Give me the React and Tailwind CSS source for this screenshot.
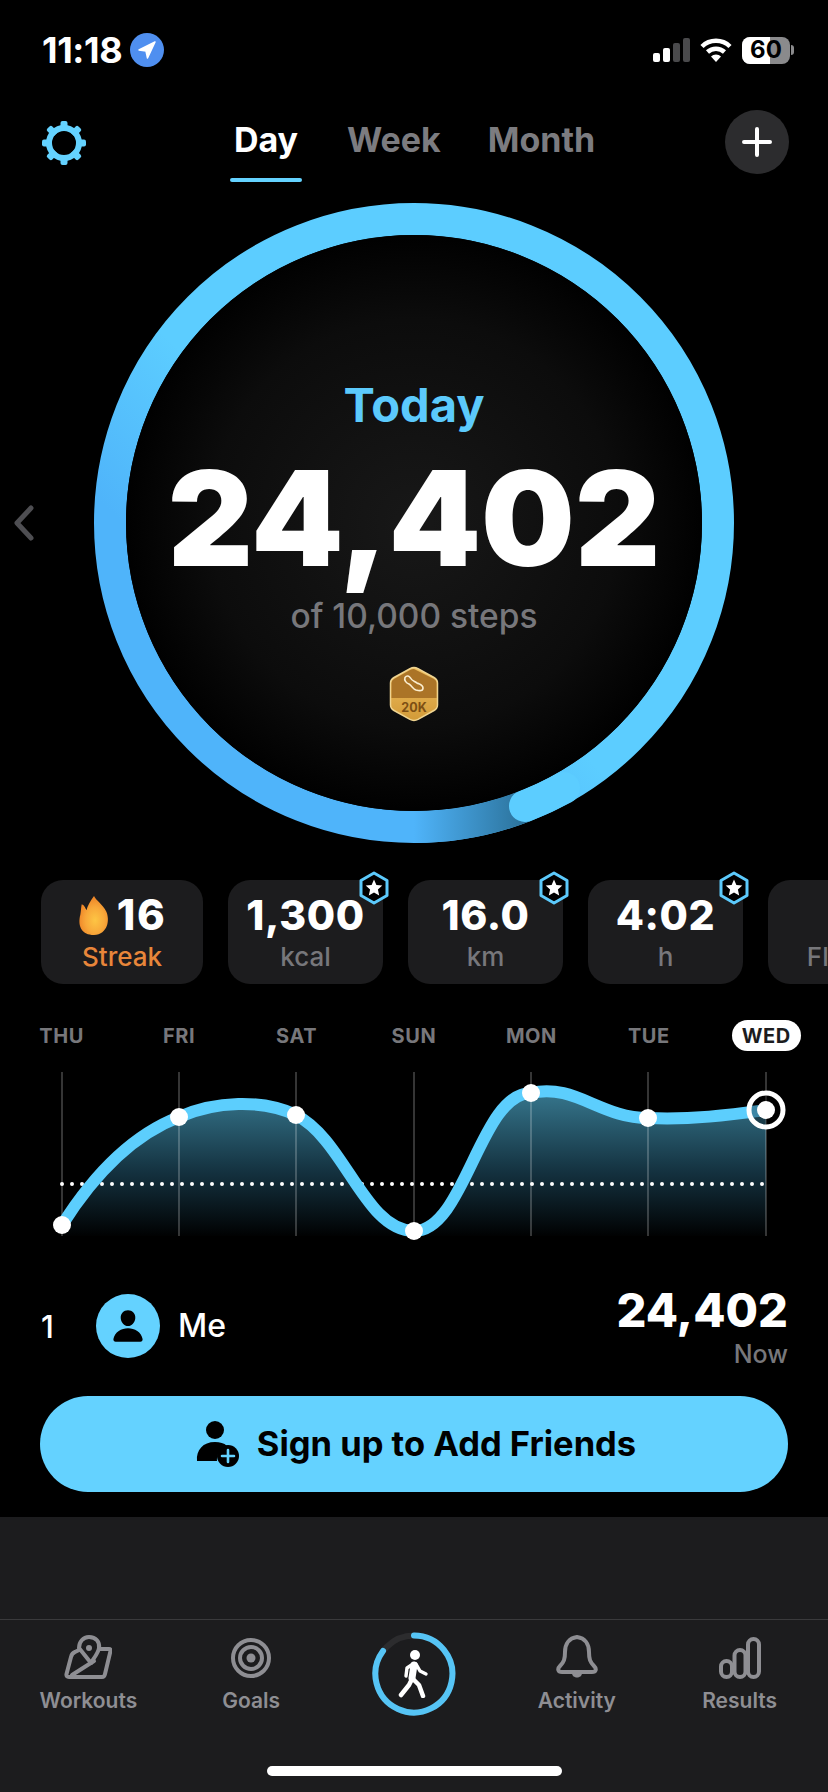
import { IoPerson } from 'react-icons/io5'

const FONT = "font-['Inter','Liberation_Sans',sans-serif]"

const STATS = [
  { value: '1,300', label: 'kcal' },
  { value: '16.0', label: 'km' },
  { value: '4:02', label: 'h' },
]

const DAYS = [
  { name: 'THU', x: 62, y: 1225 },
  { name: 'FRI', x: 179, y: 1117 },
  { name: 'SAT', x: 296, y: 1115 },
  { name: 'SUN', x: 414, y: 1231 },
  { name: 'MON', x: 531, y: 1093 },
  { name: 'TUE', x: 648, y: 1118 },
  { name: 'WED', x: 766, y: 1110 },
]

const CURVE =
  'M62 1225 C100 1165 140 1132 179 1117 C215 1101 262 1099 296 1115 C345 1140 365 1231 414 1231 C465 1231 480 1093 531 1093 C575 1083 600 1118 648 1118 C690 1120 730 1115 766 1110'

function StatusBar() {
  return (
    <div className="h-[100px] shrink-0 flex items-center justify-between pl-[42px] pr-[34px]">
      <div className="flex items-center gap-[8px]">
        <span className="text-[36px] font-bold text-white leading-none tracking-[-0.01em]">11:18</span>
        <svg width="34" height="34" viewBox="0 0 34 34">
          <circle cx="17" cy="17" r="17" fill="#4f8ff0" />
          <path d="M25 9 L9 17 L16 18 L17.5 25 Z" fill="white" stroke="white" strokeWidth="1.5" strokeLinejoin="round" />
        </svg>
      </div>
      <div className="flex items-center">
        <svg width="38" height="24" viewBox="0 0 38 24">
          <rect x="0" y="15" width="7" height="9" rx="2" fill="white" />
          <rect x="10" y="10" width="7" height="14" rx="2" fill="white" />
          <rect x="20" y="5" width="7" height="19" rx="2" fill="#4a4a4c" />
          <rect x="30" y="0" width="7" height="24" rx="2" fill="#4a4a4c" />
        </svg>
        <svg width="32" height="26" viewBox="0 0 32 26" className="ml-[9px]" fill="none" stroke="white" strokeLinecap="butt">
          <path d="M2 9.5 A20 20 0 0 1 30 9.5" strokeWidth="4.5" />
          <path d="M7.5 15 A12.5 12.5 0 0 1 24.5 15" strokeWidth="4.5" />
          <path d="M16 25 L11 19.5 A7 7 0 0 1 21 19.5 Z" fill="white" stroke="none" />
        </svg>
        <div className="relative w-[48px] h-[27px] ml-[10px] rounded-[8px] overflow-hidden bg-[#8a8a8c] flex items-center justify-center">
          <div className="absolute left-0 top-0 bottom-0 w-[28px] bg-white" />
          <span className="relative text-[24px] font-bold text-black leading-none">60</span>
        </div>
        <div className="w-[3px] h-[10px] ml-[1px] rounded-r-full bg-[#8a8a8c]" />
      </div>
    </div>
  )
}

function Gear() {
  const teeth = [0, 45, 90, 135, 180, 225, 270, 315]
  return (
    <svg width="44" height="44" viewBox="0 0 44 44">
      {teeth.map(a => (
        <rect key={a} x="18.5" y="0" width="7" height="10" rx="2" fill="#64d2ff" transform={`rotate(${a} 22 22)`} />
      ))}
      <circle cx="22" cy="22" r="15" fill="none" stroke="#64d2ff" strokeWidth="6" />
    </svg>
  )
}

function TopNav() {
  return (
    <div className="relative h-[84px] shrink-0 flex items-start pl-[42px] pr-[39px] pt-[20px] justify-between">
      <div className="mt-[1px]"><Gear /></div>
      <div className="absolute left-[230px] top-0 flex gap-[47px] text-[34px] font-bold leading-none text-[#7c7c80]">
        <div className="relative pt-[23px] h-[82px] w-[72px] flex justify-center text-white">
          Day
          <div className="absolute bottom-0 left-0 right-0 h-[4px] rounded-full bg-[#64d2ff]" />
        </div>
        <div className="pt-[23px] -ml-[2px]">Week</div>
        <div className="pt-[23px]">Month</div>
      </div>
      <div className="w-[64px] h-[64px] -mt-[10px] rounded-full bg-[#2c2c2e] flex items-center justify-center">
        <svg width="30" height="30" viewBox="0 0 30 30" stroke="white" strokeWidth="4" strokeLinecap="round">
          <path d="M15 2 V28 M2 15 H28" />
        </svg>
      </div>
    </div>
  )
}

function Ring() {
  // end of the ring sits at about 68deg clockwise from +x, the tail fades under it
  return (
    <svg width="640" height="640" viewBox="0 0 640 640" className="absolute inset-0" fill="none">
      <defs>
        <linearGradient id="ringBase" x1="1" y1="0" x2="0" y2="1">
          <stop offset="0" stopColor="#5ccdff" />
          <stop offset="0.55" stopColor="#5ccdff" />
          <stop offset="0.74" stopColor="#4fb4fa" />
        </linearGradient>
        <linearGradient id="ringTail" gradientUnits="userSpaceOnUse" x1="320" y1="0" x2="432" y2="0">
          <stop offset="0" stopColor="#4fb4fa" />
          <stop offset="1" stopColor="#2b7199" />
        </linearGradient>
      </defs>
      <circle cx="320" cy="320" r="304" stroke="url(#ringBase)" strokeWidth="32" />
      <path d="M320 624 A304 304 0 0 0 431 603" stroke="url(#ringTail)" strokeWidth="32" />
      <path d="M431 603 A304 304 0 0 0 470 585" stroke="#5ccdff" strokeWidth="32" strokeLinecap="round" />
    </svg>
  )
}

function Medal() {
  return (
    <svg width="50" height="56" viewBox="0 0 50 56">
      <defs>
        <linearGradient id="medalLow" x1="0" y1="0" x2="0" y2="1">
          <stop offset="0" stopColor="#f0c060" />
          <stop offset="1" stopColor="#d29a38" />
        </linearGradient>
      </defs>
      <path d="M25 1.5 Q27 1.5 29 2.6 L45 11.5 Q48.5 13.5 48.5 17 V39 Q48.5 42.5 45 44.5 L29 53.4 Q25 55.5 21 53.4 L5 44.5 Q1.5 42.5 1.5 39 V17 Q1.5 13.5 5 11.5 L21 2.6 Q23 1.5 25 1.5 Z" fill="url(#medalLow)" stroke="#efd491" strokeWidth="1.5" />
      <path d="M25 3 L45 13 Q47.5 14.5 47.5 17 V32 H2.5 V17 Q2.5 14.5 5 13 L21 4 Q23 3 25 3 Z" fill="#ab7427" />
      <path d="M16 11.5 C18 9 20 10 21.5 12 C23 15 25 15 28 17 C31 18.5 34 19 34 22 C34 25 31 25 27 24 C24 23 23 20 20 18 C17 17 15 14 16 11.5 Z" fill="none" stroke="#fbeed0" strokeWidth="1.6" strokeLinejoin="round" />
      <text x="25" y="46" textAnchor="middle" fontSize="12.5" fontWeight="700" fill="#7d4f14" fontFamily="Inter">20K</text>
    </svg>
  )
}

function Hero() {
  return (
    <div className="relative mt-[19px] h-[640px] w-[640px] shrink-0 self-center">
      <svg width="20" height="36" viewBox="0 0 20 36" className="absolute left-[-80px] top-[302px]" fill="none" stroke="#4e4e52" strokeWidth="5" strokeLinecap="round" strokeLinejoin="round">
        <path d="M17 3 L3 18 L17 33" />
      </svg>
      <Ring />
      <div className="absolute inset-[32px] rounded-full bg-[radial-gradient(circle,#181818_0%,#0c0c0c_50%,#000_72%)] flex flex-col items-center">
        <div className="mt-[146px] text-[47px] leading-none font-bold text-[#5ccafc]">Today</div>
        <div className="mt-[35px] text-[132px] leading-[110px] font-black text-white">24,402</div>
        <div className="mt-[27px] text-[33.5px] leading-none font-medium text-[#77777b]">of 10,000 steps</div>
        <div className="mt-[32px]"><Medal /></div>
      </div>
    </div>
  )
}

function StarBadge() {
  return (
    <svg width="32" height="34" viewBox="0 0 32 34" className="absolute -top-[9px] -right-[7px]">
      <path d="M16 2 L29 9.5 V24.5 L16 32 L3 24.5 V9.5 Z" fill="#000" stroke="#5ccafc" strokeWidth="3" strokeLinejoin="round" />
      <path d="M16 8.5 L18.4 14 L24.3 14.6 L19.9 18.6 L21.2 24.4 L16 21.4 L10.8 24.4 L12.1 18.6 L7.7 14.6 L13.6 14 Z" fill="white" />
    </svg>
  )
}

function Flame() {
  return (
    <svg width="32" height="39" viewBox="0 0 34 38" preserveAspectRatio="none">
      <defs>
        <radialGradient id="flameFill" cx="0.55" cy="0.62" r="0.6">
          <stop offset="0" stopColor="#fdc544" />
          <stop offset="0.55" stopColor="#f8a83a" />
          <stop offset="1" stopColor="#ee8427" />
        </radialGradient>
      </defs>
      <path d="M17 0 C19 4 26 8 30 15 C34 23 32 37 17 38 C4 38 0 30 2 20 C3 18 3 12 4 8 C7 9 8 12 9 14 C10 10 13 5 17 0 Z" fill="url(#flameFill)" />
    </svg>
  )
}

function StatsRow() {
  return (
    <div className="mt-[27px] h-[114px] shrink-0 flex gap-[25px] pl-[41px] pt-[10px] overflow-hidden">
      <div className="w-[162px] shrink-0 rounded-[22px] bg-[#1c1c1e] flex flex-col items-center">
        <div className="flex items-center gap-[7px] mt-[16px] h-[38px]">
          <Flame />
          <span className="text-[42px] leading-none font-extrabold text-white tracking-[0.04em]">16</span>
        </div>
        <div className="mt-[8px] text-[26px] leading-[30px] font-medium text-[#e8863a]">Streak</div>
      </div>
      {STATS.map(stat => (
        <div key={stat.label} className="relative w-[155px] shrink-0 rounded-[22px] bg-[#1c1c1e] flex flex-col items-center">
          <StarBadge />
          <div className="mt-[16px] h-[38px] text-[41px] leading-[38px] font-extrabold text-white tracking-[0.015em]">{stat.value}</div>
          <div className="mt-[8px] text-[26px] leading-[30px] font-medium text-[#77777b]">{stat.label}</div>
        </div>
      ))}
      <div className="w-[155px] shrink-0 rounded-[22px] bg-[#1c1c1e] flex flex-col items-center">
        <div className="mt-[16px] h-[38px]" />
        <div className="mt-[8px] text-[26px] leading-[30px] font-medium text-[#77777b]">Floors</div>
      </div>
    </div>
  )
}

function Chart() {
  return (
    <div className="shrink-0">
      <div className="mt-[36px] h-[31px]">
        <div className="grid grid-cols-7 w-[825px] pl-[3px] text-[20px] font-bold text-[#77777b] tracking-[0.03em]">
          {DAYS.map(day => (
            <div key={day.name} className="flex justify-center items-center h-[31px]">
              <span className={day.name === 'WED' ? 'px-[10px] h-[31px] rounded-full bg-white text-[#1c1c1e] flex items-center' : ''}>
                {day.name}
              </span>
            </div>
          ))}
        </div>
      </div>
      <svg width="828" height="199" viewBox="0 1051 828 199" className="block">
        <defs>
          <linearGradient id="areaFill" gradientUnits="userSpaceOnUse" x1="0" y1="1090" x2="0" y2="1238">
            <stop offset="0" stopColor="#37788f" />
            <stop offset="0.55" stopColor="#143240" />
            <stop offset="1" stopColor="#000" />
          </linearGradient>
        </defs>
        <path d={`${CURVE} V1236 H62 Z`} fill="url(#areaFill)" />
        {DAYS.map(day => (
          <line key={day.name} x1={day.x} x2={day.x} y1="1072" y2="1236" stroke="white" strokeOpacity="0.42" strokeWidth="1" />
        ))}
        <line x1="62" x2="766" y1="1184" y2="1184" stroke="white" strokeWidth="4" strokeLinecap="round" strokeDasharray="0 10" />
        <path d={CURVE} fill="none" stroke="#5ccefd" strokeWidth="12" strokeLinecap="round" />
        {DAYS.slice(0, 6).map(day => (
          <circle key={day.name} cx={day.x} cy={day.y} r="9" fill="white" />
        ))}
        <circle cx="766" cy="1110" r="17" fill="#000" fillOpacity="0.35" stroke="white" strokeWidth="5" />
        <circle cx="766" cy="1110" r="9" fill="white" />
      </svg>
    </div>
  )
}

function Leader() {
  return (
    <div className="mt-[37px] h-[81px] shrink-0 flex items-center pl-[41px] pr-[40px] text-white">
      <span className="w-[55px] text-[31px] leading-none font-medium -mt-[3px]">1</span>
      <div className="w-[64px] h-[64px] rounded-full bg-[#64d2ff] flex items-center justify-center -mt-[3px]">
        <IoPerson size={36} color="#000" />
      </div>
      <span className="ml-[18px] text-[32px] leading-none font-medium -mt-[3px]">Me</span>
      <div className="ml-auto flex flex-col items-end">
        <span className="text-[47px] leading-[46px] font-extrabold">24,402</span>
        <span className="mt-[7px] text-[25px] leading-[28px] font-medium text-[#77777b]">Now</span>
      </div>
    </div>
  )
}

function AddFriendIcon() {
  return (
    <svg width="44" height="46" viewBox="0 0 44 46">
      <circle cx="20" cy="9" r="9" fill="#000" />
      <path d="M2 40 C1 29 8 21 20 21 C25 21 29 22 32 25 A14 14 0 0 0 22 40 Z" fill="#000" />
      <circle cx="33" cy="35" r="11" fill="#000" />
      <path d="M33 29 V41 M27 35 H39" stroke="#64d2ff" strokeWidth="2.6" strokeLinecap="round" />
    </svg>
  )
}

function Tab({ label, children }) {
  return (
    <div className="flex flex-col items-center">
      <div className="h-[46px] flex items-end">{children}</div>
      <span className="mt-[10px] text-[21px] leading-[24px] font-semibold text-[#8e8e93]">{label}</span>
    </div>
  )
}

function Walker() {
  return (
    <svg width="32" height="48" viewBox="0 0 32 48" fill="none" stroke="white" strokeLinecap="round" strokeLinejoin="round">
      <circle cx="17" cy="5" r="5" fill="white" stroke="none" />
      <path d="M16 15 L14 28" strokeWidth="7" />
      <path d="M14 29 L11 35 L3 45" strokeWidth="4.5" />
      <path d="M15 29 L21 35 L25 46" strokeWidth="4.5" />
      <path d="M15 14 L9 18 L8 26" strokeWidth="3.4" />
      <path d="M18 14 L22 21 L28 24" strokeWidth="3.4" />
    </svg>
  )
}

function TabBar() {
  const grey = { fill: 'none', stroke: '#8e8e93', strokeWidth: 4, strokeLinecap: 'round', strokeLinejoin: 'round' }
  return (
    <div className="relative flex-1 bg-[#1c1c1e]">
      <div className="h-[102px]" />
      <div className="h-px bg-[#3a3a3c]" />
      <div className="grid grid-cols-5 px-[7px] pt-[13px]">
        <Tab label="Workouts">
          <svg width="48" height="44" viewBox="0 0 48 44" {...grey}>
            <path d="M25 2 C32 2 36 7 35 13 C34 19 29 24 27 28 L15 13 C15 7 19 2 25 2 Z" />
            <circle cx="25" cy="13" r="3" fill="#8e8e93" stroke="none" />
            <path d="M36 14 L45 14 Q47 14 46.5 16 L41 39 Q40.5 42 38 42 L5 42 Q2 42 2.5 39 L7 22 Q8 18 11 17 L15 15" />
            <path d="M8 40 L30 26" />
          </svg>
        </Tab>
        <Tab label="Goals">
          <svg width="40" height="42" viewBox="0 0 40 42" {...grey}>
            <circle cx="20" cy="21" r="18" />
            <circle cx="20" cy="21" r="11" />
            <circle cx="20" cy="21" r="4.5" fill="#8e8e93" stroke="none" />
          </svg>
        </Tab>
        <div className="relative w-[84px] h-[84px] justify-self-center -mt-[1px]">
          <svg width="84" height="84" viewBox="0 0 84 84" fill="none" className="absolute inset-0">
            <circle cx="42" cy="42" r="38.5" stroke="#2c2c2e" strokeWidth="6" />
            <path d="M42 3.5 A38.5 38.5 0 1 1 11 19" stroke="#56c4f5" strokeWidth="6" strokeLinecap="round" />
          </svg>
          <div className="absolute inset-0 flex items-center justify-center">
            <Walker />
          </div>
        </div>
        <Tab label="Activity">
          <svg width="44" height="44" viewBox="0 0 44 44" {...grey}>
            <path d="M22 2 C14 3 10 9 10 17 C10 24 9 27 5 31 C2 34 3 37 7 37 H37 C41 37 42 34 39 31 C35 27 34 24 34 17 C34 9 30 3 22 2 Z" />
            <path d="M17 38 C17 44 27 44 27 38 Z" fill="#8e8e93" stroke="none" />
          </svg>
        </Tab>
        <Tab label="Results">
          <svg width="42" height="42" viewBox="0 0 42 42" {...grey}>
            <rect x="2" y="24" width="11" height="16" rx="5.5" />
            <rect x="15.5" y="13" width="11" height="27" rx="5.5" />
            <rect x="29" y="2" width="11" height="38" rx="5.5" />
          </svg>
        </Tab>
      </div>
      <div className="absolute bottom-[16px] left-[267px] w-[295px] h-[10px] rounded-full bg-white" />
    </div>
  )
}

export default function App() {
  return (
    <div className={`${FONT} w-[828px] h-[1792px] bg-black flex flex-col overflow-hidden`}>
      <StatusBar />
      <TopNav />
      <Hero />
      <StatsRow />
      <Chart />
      <Leader />
      <button className="mt-[28px] mx-[40px] h-[96px] shrink-0 rounded-full bg-[#64d2ff] flex items-center justify-center gap-[18px] pl-[3px] text-[34.5px] font-bold text-black">
        <AddFriendIcon />
        <span>Sign up to Add Friends</span>
      </button>
      <div className="h-[25px] shrink-0" />
      <TabBar />
    </div>
  )
}
